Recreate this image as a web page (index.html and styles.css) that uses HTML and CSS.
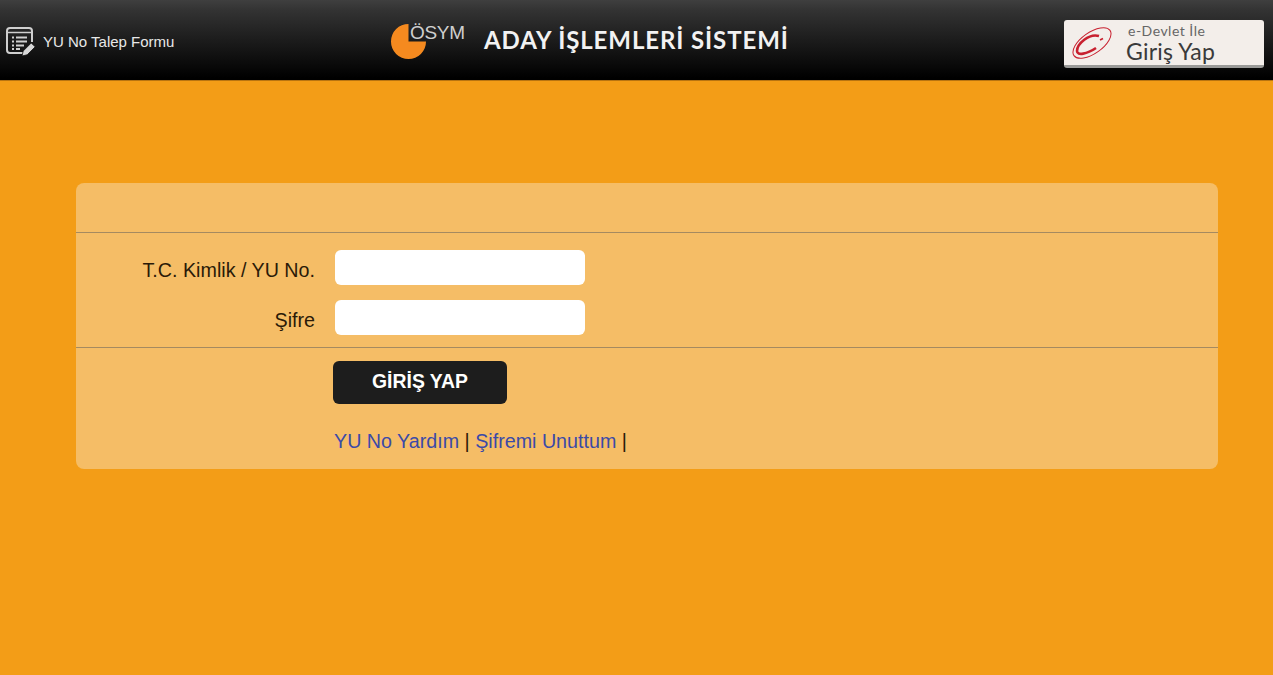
FILE: index.html
```html
<!DOCTYPE html>
<html lang="tr">
<head>
<meta charset="utf-8">
<title>ADAY İŞLEMLERİ SİSTEMİ</title>
<link rel="stylesheet" href="styles.css">
</head>
<body>
<header class="topbar">
  <a class="talep" href="#">
    <svg class="talep-icon" viewBox="0 0 30 30" width="30" height="30" fill="none" stroke="#cfcfcf">
      <path d="M21 26H4a3 3 0 0 1-3-3V4a3 3 0 0 1 3-3h19a3 3 0 0 1 3 3v11" stroke-width="2"/>
      <path d="M1 5.500h25" stroke-width="1.500"/>
      <path d="M6 10.500h2M10 10.500h11M6 14.500h2M10 14.500h11M6 18.500h2M10 18.500h8M6 22h2M10 22h4" stroke-width="2"/>
      <path d="M16 29l1.200-5 8-8 4 3.800-8 8z" fill="#d8d8d8" stroke="#111" stroke-width="0.800"/>
    </svg>
    <span>YU No Talep Formu</span>
  </a>
  <div class="brand">
    <div class="logo">
      <svg viewBox="0 0 38 38" width="37" height="37"><path d="M19 1a18 18 0 1 0 18 18H19z" fill="#f58a1f"/></svg>
      <span class="logo-text">ÖSYM</span>
    </div>
    <h1 class="title">ADAY İŞLEMLERİ SİSTEMİ</h1>
  </div>
  <a class="edevlet" href="#">
    <svg class="edevlet-logo" viewBox="0 0 42 34" width="42" height="34" fill="none" stroke="#c8202f">
      <ellipse cx="21" cy="17" rx="22" ry="10.500" transform="rotate(-35 21 17)" stroke-width="1"/>
      <path d="M28 10C18 7 6 18 6 25c0 5 10 3 19-3" stroke-width="2.600"/>
      <path d="M29 14l3-1.500" stroke-width="1.800"/>
    </svg>
    <span class="edevlet-text">
      <span class="edevlet-small">e-Devlet İle</span>
      <span class="edevlet-big">Giriş Yap</span>
    </span>
  </a>
</header>
<main class="page">
  <form class="card">
    <div class="card-head"></div>
    <div class="fields">
      <div class="row">
        <label class="label" for="tc">T.C. Kimlik / YU No.</label>
        <input class="input" id="tc" type="text">
      </div>
      <div class="row">
        <label class="label" for="sifre">Şifre</label>
        <input class="input" id="sifre" type="password">
      </div>
    </div>
    <div class="actions">
      <button class="submit" type="button">GİRİŞ YAP</button>
      <p class="links"><a href="#">YU No Yardım</a> | <a href="#">Şifremi Unuttum</a> |</p>
    </div>
  </form>
</main>
</body>
</html>
```
FILE: styles.css
```css
* { box-sizing: border-box; }
html, body { margin: 0; height: 100%; }
body {
  background: #f39d17;
  font-family: "Liberation Sans", Arial, sans-serif;
  color: #2a1a08;
}
.topbar {
  height: 81px;
  display: flex;
  align-items: center;
  justify-content: space-between;
  padding: 0 9px 0 6px;
  background: linear-gradient(#3f3f3f 0, #333 10px, #1c1c1c 40px, #000 78px);
  border-bottom: 1px solid #b87410;
  position: relative;
}
.talep {
  display: flex;
  align-items: center;
  gap: 7px;
  margin-top: 2px;
  color: #e8e8e8;
  font-size: 15px;
  text-decoration: none;
  width: 200px;
}
.talep-icon { flex: none; margin-top: 1px; }
.brand {
  position: absolute;
  left: 390px;
  top: 21px;
  display: flex;
  align-items: flex-start;
}
.logo { position: relative; width: 94px; height: 38px; }
.logo svg { display: block; margin-top: 2px; }
.logo-text {
  position: absolute;
  left: 20px;
  top: 0;
  color: #cfcfcf;
  font-size: 19px;
  line-height: 24px;
  letter-spacing: -0.3px;
}
.title {
  margin: 4px 0 0;
  color: #f2f2f2;
  font-family: Lato, "Open Sans", sans-serif;
  font-size: 24px;
  line-height: 30px;
  font-weight: 700;
  white-space: nowrap;
  letter-spacing: 0.9px;
}
.edevlet {
  width: 200px;
  height: 48px;
  margin-top: 8px;
  display: flex;
  align-items: center;
  gap: 13px;
  padding: 0 0 0 7px;
  background: #f3eeea;
  border-radius: 3px;
  border-bottom: 3px solid #9a9a98;
  text-decoration: none;
}
.edevlet-logo { flex: none; }
.edevlet-text { display: flex; flex-direction: column; padding-top: 3px; }
.edevlet-small {
  color: #666;
  font-family: Lato, sans-serif;
  font-size: 14px;
  line-height: 15px;
  padding-left: 2px;
  letter-spacing: 0.5px;
}
.edevlet-big {
  color: #3a3a3a;
  font-family: Lato, sans-serif;
  font-size: 23px;
  line-height: 27px;
  letter-spacing: 0.2px;
}
.page { padding: 102px 55px 0 76px; }
.card {
  background: #f5bd66;
  border-radius: 8px;
  height: 286px;
}
.card-head { height: 50px; border-bottom: 1px solid #a58a60; }
.fields {
  height: 115px;
  padding-top: 17px;
  border-bottom: 1px solid #a58a60;
  display: flex;
  flex-direction: column;
  gap: 15px;
}
.row { display: flex; align-items: flex-start; gap: 20px; height: 35px; }
.label {
  width: 239px;
  text-align: right;
  font-size: 19.700px;
  line-height: 29px;
  padding-top: 6px;
  height: 35px;
  white-space: nowrap;
}
.input {
  width: 250px;
  height: 35px;
  border: 0;
  border-radius: 6px;
  background: #fff;
  padding: 0 8px;
}
.actions { padding: 13px 0 0 257px; }
.submit {
  display: block;
  width: 174px;
  height: 43px;
  background: #1d1d1d;
  color: #fff;
  border: 0;
  border-radius: 6px;
  font-family: "Liberation Sans", Arial, sans-serif;
  font-size: 19.400px;
  font-weight: 700;
  padding: 0 0 2px;
}
.links {
  margin: 25px 0 0 1px;
  font-size: 19.700px;
  line-height: 24px;
}
.links a { color: #3b4aa8; text-decoration: none; }
```
